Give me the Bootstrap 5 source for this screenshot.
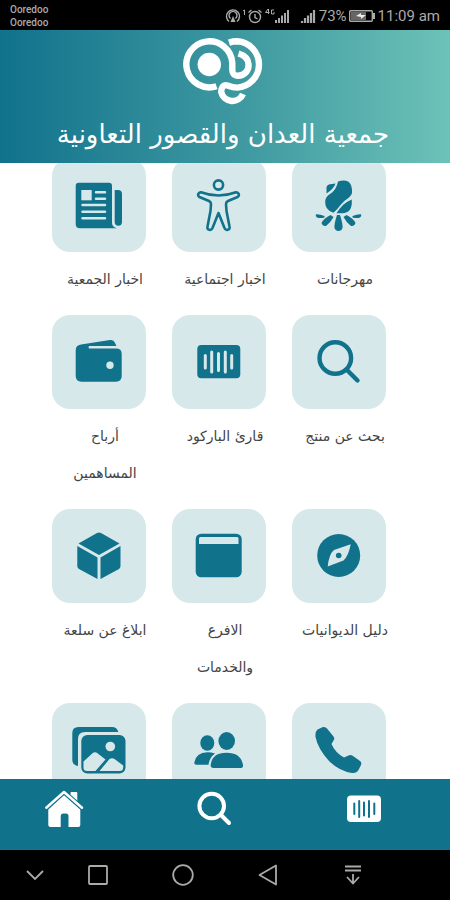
<!DOCTYPE html>
<html lang="ar" dir="rtl">
<head>
<meta charset="utf-8">
<meta name="viewport" content="width=device-width, initial-scale=1">
<title>جمعية العدان والقصور التعاونية</title>
<link rel="stylesheet" href="https://cdn.jsdelivr.net/npm/bootstrap@5.3.0/dist/css/bootstrap.min.css">
<style>
:root { --brand: #11728c; --tile: #d7e8eb; }
body { font-family: "DejaVu Sans", sans-serif; background: #fff; }
svg { display: block; }
.status-bar { background: #000; color: #aaa; height: 30px; padding: 2px 10px 0; font-family: Roboto, sans-serif; font-size: 15px; }
.carriers { font-size: 10px; line-height: 13px; font-weight: 500; }
.battery { margin: 0 2px; }
.app-header { background: linear-gradient(to right, #11728c, #3f9aa1 55%, #6dc2b8); color: #fff; height: 133px; padding: 8px 4px 0 0; }
.app-title { font-size: 26px; line-height: 40px; margin: 8px 0 0; font-weight: 400; white-space: nowrap; }
.services { min-height: 0; }
.service-grid { margin: -5px 10% 0; }
.service { color: #444; font-size: 14px; line-height: 37px; padding-bottom: 17px; }
.tile { width: 94px; height: 94px; border-radius: 18px; background: var(--tile); color: var(--brand); margin: 0 auto 9px 7px; }
.service-name { white-space: nowrap; }
.tab-bar { background: var(--brand); height: 71px; padding: 10px 0 0; }
.tab-bar a { color: #fff; padding-right: 22px; }
.system-bar { background: #000; height: 50px; padding: 0 54px 0 14px; display: grid; grid-template-columns: 41fr 85fr 85fr 85fr 85fr; place-items: center; }
.system-bar button { background: none; border: 0; padding: 0; color: #aaa; }
.cut { fill: var(--tile); }
.cut-line { stroke: var(--tile); fill: none; }
</style>
</head>
<body>
<div class="vh-100 d-flex flex-column overflow-hidden">
  <div class="status-bar flex-shrink-0 d-flex align-items-center justify-content-between" dir="ltr">
    <div class="carriers">Ooredoo<br>Ooredoo</div>
    <div class="d-flex align-items-center">
      <svg width="94" height="20" viewBox="0 0 94 20" fill="none" stroke="#aaa" stroke-width="1.4" aria-hidden="true">
        <path d="M4 15.500A6.500 6.500 0 1 1 12 15.500M5.500 12.500A4 4 0 1 1 10.500 12.500"/><path d="M8 10l-2.500 6h5z" fill="#aaa" stroke="none"/>
        <path d="M18 5l1.500-1v5" stroke-width="1"/>
        <circle cx="30" cy="11" r="5.500"/><path d="M30 8v3.500l2.500 1.500M23.500 6.500l3-2.500M36.500 6.500l-3-2.500"/>
        <path d="M43.500 3v5M40.500 6.500h4M40.500 6.500l2.500-3.500M49 4h-2.500v4H49V6" stroke-width="1"/>
        <path d="M51 17v-3M54 17v-5M57 17V9.500M60 17V7M63 17V4" stroke-width="2"/>
        <path d="M77 17v-2M80 17v-5M83 17V9.500M86 17V7M89 17V4" stroke-width="2.200"/>
      </svg>
      <span>73%</span>
      <svg class="battery" width="27" height="16" viewBox="0 0 27 16" aria-hidden="true">
        <rect x=".7" y="2.700" width="22.600" height="10.600" rx="1" fill="none" stroke="#aaa" stroke-width="1.400"/><path d="M2 4h15v8H2z" fill="#666"/><path d="M24 5h2v6h-2z" fill="#aaa"/><path d="M7 8l5-3v2h5l-5 4V9z" fill="#eee"/>
      </svg>
      <span>11:09 am</span>
    </div>
  </div>

  <header class="app-header flex-shrink-0 d-flex flex-column align-items-center">
    <svg class="flex-shrink-0" width="80" height="68" viewBox="0 0 80 68" fill="none" stroke="#fff" stroke-width="6.400" aria-hidden="true">
      <path d="M33.500 48.200A23 23 0 1 1 49.300 25V31Q49 37.700 55 37.700C62 37.700 66 32 65.500 26Q65 18.500 55.500 15.500"/>
      <path d="M46 4.600Q50 3.300 54.300 3.300A23.200 23.200 0 0 1 54.300 49.600Q50 49.600 44.500 47.500C40 46 38.200 50 38.200 54A11.500 11.500 0 0 0 60 56"/>
      <circle cx="26.300" cy="26.500" r="11.700" fill="#fff" stroke="none"/>
    </svg>
    <h1 class="app-title">جمعية العدان والقصور التعاونية</h1>
  </header>

  <main class="services flex-grow-1 overflow-hidden">
    <div class="service-grid row row-cols-3 g-0 text-center">
      <a href="#" class="service col text-decoration-none"><span class="tile d-flex align-items-center justify-content-center">
        <svg width="54" height="54" viewBox="0 0 54 54" fill="currentColor" aria-hidden="true">
          <path d="M26 3.500Q36 .5 39 7Q42 16 37 19.500Q33 22 29 26.500Q26 30.500 21.500 34.800Q12.500 32 13.200 23Q13.500 19 18 16Q24.500 12 26 3.500ZM14.500 15.500V9Q15.500 6 20 6L23.500 5.500Q22 10.500 14.500 15.500ZM39.700 21.500Q41 35 30 35.300H24.500Q27 31 31 27Q34 24 39.700 21.500Z"/>
          <path d="M25 37h3q3 9 2.500 13q-1 3-4 3t-4-3Q22 46 25 37ZM18.500 37L21.500 39Q19 44 14 48Q10.500 48.500 9.500 45Q12 40 18.500 37ZM34.500 37L31.500 39Q34 44 39 48Q42.500 48.500 43.500 45Q41 40 34.500 37ZM4 36.200Q8 36 12.500 38V39.500Q8 40.500 5 39.500Q3 38 4 36.200ZM49 36.200Q45 36 40.500 38V39.500Q45 40.500 48 39.500Q50 38 49 36.200Z"/>
        </svg></span><span class="service-name">مهرجانات</span></a>
      <a href="#" class="service col text-decoration-none"><span class="tile d-flex align-items-center justify-content-center">
        <svg width="54" height="54" viewBox="0 0 54 54" fill="none" stroke="currentColor" stroke-width="2.600" stroke-linejoin="round" aria-hidden="true">
          <circle cx="26.500" cy="7" r="4.600"/>
          <path d="M9 14.200Q18 17.500 26.500 17.500T44 14.200A2.600 2.600 0 0 1 45.600 19L36 23Q34 24 34 26L34.500 33L37.500 48.500A2.600 2.600 0 0 1 32.500 50L26.500 35L20.500 50A2.600 2.600 0 0 1 15.500 48.500L18.500 33L19 26Q19 24 17 23L7.400 19A2.600 2.600 0 0 1 9 14.200Z"/>
        </svg></span><span class="service-name">اخبار اجتماعية</span></a>
      <a href="#" class="service col text-decoration-none"><span class="tile d-flex align-items-center justify-content-center">
        <svg width="54" height="54" viewBox="0 0 54 54" fill="currentColor" aria-hidden="true">
          <path d="M6.700 4.700H37Q40 4.700 40 8V45Q40 49 45 50.300H8Q3.700 50.300 3.700 46V8Q3.700 4.700 6.700 4.700ZM42.700 12H46Q50 12 50 16V44Q50 47.700 46.400 47.700T42.700 44Z"/>
          <path class="cut" d="M9.300 12h10.400v10.300H9.300z"/><path class="cut-line" stroke-width="2.500" stroke-linecap="round" d="M24 14.300h9M24 20.700h9M10.500 27H33M10.500 33.700H33M10.500 40.300H33"/>
        </svg></span><span class="service-name">اخبار الجمعية</span></a>

      <a href="#" class="service col text-decoration-none"><span class="tile d-flex align-items-center justify-content-center">
        <svg width="54" height="54" viewBox="0 0 54 54" fill="none" stroke="currentColor" stroke-width="4.400" stroke-linecap="round" aria-hidden="true">
          <circle cx="23.300" cy="23" r="15.800"/><path d="M35 35l10.500 10.500"/>
        </svg></span><span class="service-name">بحث عن منتج</span></a>
      <a href="#" class="service col text-decoration-none"><span class="tile d-flex align-items-center justify-content-center">
        <svg width="54" height="54" viewBox="0 0 54 54" fill="currentColor" aria-hidden="true">
          <rect x="5.300" y="10" width="43" height="33.300" rx="4"/><path class="cut-line" stroke-width="3" stroke-linecap="round" d="M13.300 20.500v12.500M19.700 17v20M26.500 18.500v17M33.300 17v20M39.700 20.500v12.500"/>
        </svg></span><span class="service-name">قارئ الباركود</span></a>
      <a href="#" class="service col text-decoration-none"><span class="tile d-flex align-items-center justify-content-center">
        <svg width="54" height="54" viewBox="0 0 54 54" fill="currentColor" aria-hidden="true">
          <path d="M9 9.500L38 5Q41 4.500 42.500 7L44.500 11H17Q16 12 17 13.600H44Q49.700 13.600 49.700 19V41Q49.700 46.700 44 46.700H9.500Q3.700 46.700 3.700 41V15Q3.700 10.300 9 9.500Z"/><circle class="cut" cx="38" cy="30.300" r="3.700"/>
        </svg></span><span class="service-name">أرباح<br>المساهمين</span></a>

      <a href="#" class="service col text-decoration-none"><span class="tile d-flex align-items-center justify-content-center">
        <svg width="54" height="54" viewBox="0 0 54 54" fill="currentColor" aria-hidden="true">
          <circle cx="26.700" cy="26.500" r="21.500"/><path class="cut" d="M38.700 15.300Q36.500 27 31.500 31.500L15.700 37.500Q17 25 22 21Z"/><circle cx="26.700" cy="26.500" r="2.800"/>
        </svg></span><span class="service-name">دليل الديوانيات</span></a>
      <a href="#" class="service col text-decoration-none"><span class="tile d-flex align-items-center justify-content-center">
        <svg width="54" height="54" viewBox="0 0 54 54" fill="currentColor" aria-hidden="true">
          <rect x="3.700" y="4.700" width="46" height="43.600" rx="5.500"/><path class="cut" d="M7 15v-5.500Q7 8 8.500 8h36.500q1.500 0 1.500 1.500V15z"/>
        </svg></span><span class="service-name">الافرع<br>والخدمات</span></a>
      <a href="#" class="service col text-decoration-none"><span class="tile d-flex align-items-center justify-content-center">
        <svg width="54" height="54" viewBox="0 0 54 54" fill="currentColor" aria-hidden="true">
          <path d="M25 4Q27 3 29 4L47.500 14.500L27 26L6.500 14.500ZM5.300 17L25.500 28.500V50L7 40Q5.300 39 5.300 37ZM48.500 17L28.500 28.500V50L47 40Q48.500 39 48.500 37Z"/>
        </svg></span><span class="service-name">ابلاغ عن سلعة</span></a>

      <a href="#" class="service col" aria-label="اتصل بنا"><span class="tile d-flex align-items-center justify-content-center">
        <svg width="54" height="54" viewBox="0 0 54 54" fill="currentColor" aria-hidden="true">
          <path d="M5.500 6.500L11 4Q13.500 3.500 15 5.500L21.500 13.500Q23 15.500 21.500 17.500L19.500 21Q23 29.500 32 34.500L36.500 32.500Q38.500 31.500 41 33L48 38Q50 39.500 49 42L46.500 47Q44.500 50.500 40 50Q27 48 17 38Q6 26 3.500 14Q3 8.500 5.500 6.500Z"/>
        </svg></span></a>
      <a href="#" class="service col" aria-label="المساهمون"><span class="tile d-flex align-items-center justify-content-center">
        <svg width="54" height="54" viewBox="0 0 54 54" fill="currentColor" aria-hidden="true">
          <ellipse cx="34.700" cy="18" rx="8.300" ry="9"/><path d="M18.700 42Q20 29.700 34.500 29.700T51 42Q51.500 45 48 45H21.500Q18.500 45 18.700 42Z"/>
          <ellipse cx="15.300" cy="20" rx="7" ry="7.700"/><path d="M23 30.500Q17.500 34.500 16.500 41.700H4.500Q2 41.700 2.300 39.500Q4 29.700 15.300 29.300Q19.500 29.300 23 30.500Z"/>
        </svg></span></a>
      <a href="#" class="service col" aria-label="معرض الصور"><span class="tile d-flex align-items-center justify-content-center">
        <svg width="54" height="54" viewBox="0 0 54 54" fill="currentColor" aria-hidden="true">
          <path d="M6.500 4H40Q45 4 46.300 9H13Q6 9 6 16V43Q.3 42 .3 37V10Q.3 4 6.500 4Z"/><rect x="9.300" y="12" width="44.200" height="38.500" rx="6"/>
          <circle class="cut" cx="38.300" cy="23.500" r="4.800"/><path class="cut" d="M11.500 38.500L20.500 30.300Q23 28.300 25.500 30.300L33.500 36.500L23.500 48H15Q11.500 48 11.500 44.500ZM27.500 48L37.500 36Q40 34.300 42.500 36L51.200 42.500V44.500Q51.200 48 47.500 48Z"/>
        </svg></span></a>
    </div>
  </main>

  <nav class="tab-bar flex-shrink-0 row g-0" dir="ltr">
    <a href="#" class="col d-flex justify-content-center" aria-label="الرئيسية">
      <svg width="40" height="40" viewBox="0 0 40 40" fill="#fff" aria-hidden="true">
        <path d="M4.300 20.500L20 6L36.300 20.500V36Q36.300 38 34.300 38H24.500V27Q24.500 24.500 22 24.500H19Q16.700 24.500 16.700 27V38H6.500Q4.300 38 4.300 36ZM26.500 7V4Q26.500 3 27.500 3H32.300Q33.300 3 33.300 4V13Z"/>
        <path d="M2.300 18.700L20 3L38 18.700" fill="none" stroke="#11728c" stroke-width="4.500"/><path d="M2.300 18.700L20 3L38 18.700" fill="none" stroke="#fff" stroke-width="2.500" stroke-linecap="round" stroke-linejoin="round"/>
      </svg></a>
    <a href="#" class="col d-flex justify-content-center" aria-label="بحث">
      <svg width="40" height="40" viewBox="0 0 40 40" fill="none" stroke="#fff" stroke-width="4" stroke-linecap="round" aria-hidden="true"><circle cx="17.700" cy="17" r="12.300"/><path d="M27 26l8 8"/></svg></a>
    <a href="#" class="col d-flex justify-content-center" aria-label="الباركود">
      <svg width="40" height="40" viewBox="0 0 40 40" aria-hidden="true"><rect x="3" y="6.500" width="34" height="26.500" rx="4" fill="#fff"/><path stroke="#11728c" stroke-width="2" stroke-linecap="round" d="M10.300 14.500v10.500M15.200 12v16M20 13.500v13M25 12v16M30.300 14.500v10.500"/></svg></a>
  </nav>

  <div class="system-bar flex-shrink-0" dir="ltr">
    <button type="button" aria-label="إخفاء"><svg width="24" height="24" viewBox="0 0 24 24" fill="none" stroke="currentColor" stroke-width="1.800"><path d="M4 8l8 8 8-8"/></svg></button>
    <button type="button" aria-label="التطبيقات"><svg width="24" height="24" viewBox="0 0 24 24" fill="none" stroke="currentColor" stroke-width="1.800"><rect x="3" y="3" width="18" height="18" rx="1"/></svg></button>
    <button type="button" aria-label="الشاشة الرئيسية"><svg width="24" height="24" viewBox="0 0 24 24" fill="none" stroke="currentColor" stroke-width="1.800"><circle cx="12" cy="12" r="9.800"/></svg></button>
    <button type="button" aria-label="رجوع"><svg width="24" height="24" viewBox="0 0 24 24" fill="none" stroke="currentColor" stroke-width="1.800" stroke-linejoin="round"><path d="M20 2.500v19L3.500 12z"/></svg></button>
    <button type="button" aria-label="الإشعارات"><svg width="24" height="24" viewBox="0 0 24 24" fill="none" stroke="currentColor" stroke-width="1.800"><path d="M4 3.500h16M4 7.500h16M12 11v9.500M6 14l6 6.500 6-6.500"/></svg></button>
  </div>
</div>
<script src="https://cdn.jsdelivr.net/npm/bootstrap@5.3.0/dist/js/bootstrap.bundle.min.js"></script>
</body>
</html>
